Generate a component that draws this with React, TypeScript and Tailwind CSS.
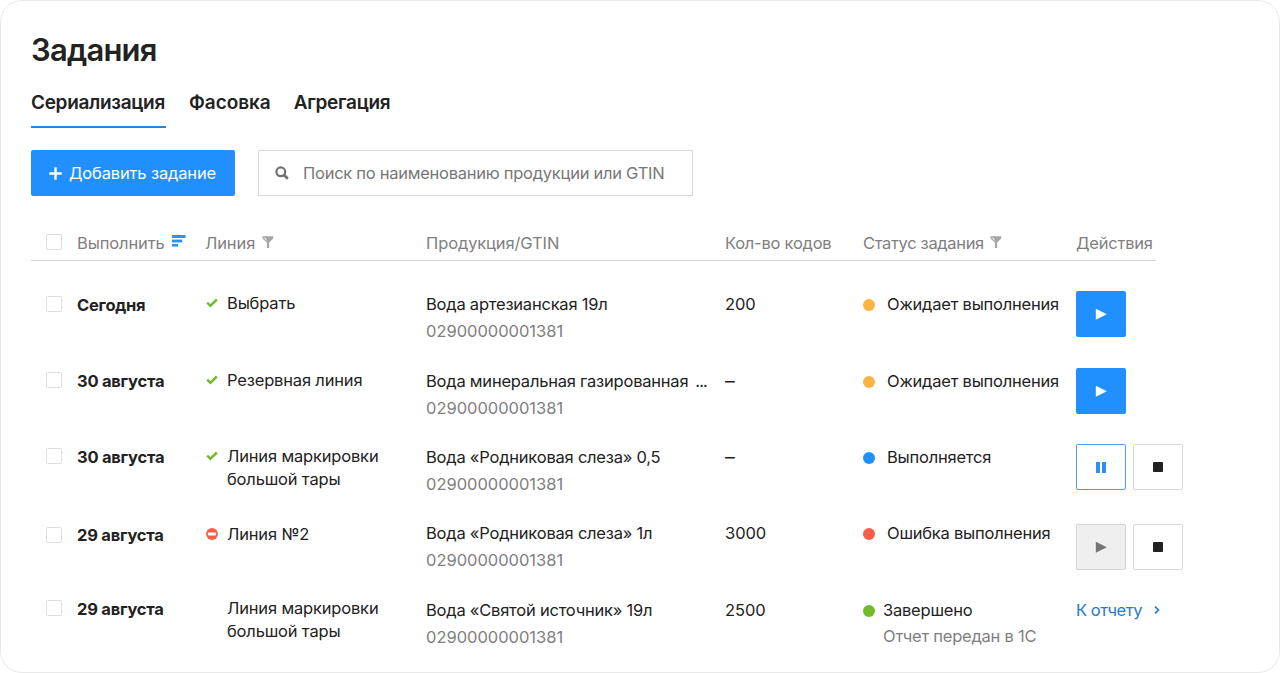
import type { ReactNode } from "react";

const COLS = "grid grid-cols-[46px_128px_22px_199px_299px_138px_213px_1fr]";

type Status = { color: string; label: string; note?: string; tight?: boolean };
type Task = {
  height: string;
  checkTop: string;
  date: string;
  dateTop: string;
  line: string[];
  lineTop: string;
  lineState: "ok" | "blocked" | "none";
  product: string;
  truncated?: boolean;
  count: string;
  status: Status;
  actions: ReactNode;
};

function Checkbox() {
  return <span className="ml-[15px] block size-4 rounded-[2px] border border-[#dedede] bg-white" />;
}

function FilterIcon() {
  return (
    <svg width="12" height="13" viewBox="0 0 12 13" fill="none">
      <path d="M0 0.3H11.5L10.8 3L7.1 6.4V12H4.9V6.4L1 3Z" fill="#a6a6a6" />
      <path d="M2.2 1.6L4.6 4.4" stroke="#fff" strokeWidth="1" />
    </svg>
  );
}

function SortIcon() {
  return (
    <svg width="14" height="13" viewBox="0 0 14 13" fill="#2a92fa">
      <rect x="0" y="0" width="13.5" height="3" />
      <rect x="0" y="4.6" width="10.3" height="2.8" />
      <rect x="0" y="9" width="6" height="2.6" />
    </svg>
  );
}

function CheckIcon() {
  return (
    <svg width="12" height="10" viewBox="0 0 12 10" fill="none">
      <path d="M1.2 4.7L4.4 7.8L10.8 1.5" stroke="#6fbb2c" strokeWidth="2.5" />
    </svg>
  );
}

function BlockedIcon() {
  return (
    <svg width="12" height="12" viewBox="0 0 12 12">
      <circle cx="6" cy="6" r="5.9" fill="#fa5d48" />
      <rect x="2" y="4.6" width="8" height="2.8" rx="0.6" fill="#fff" />
    </svg>
  );
}

function PlayIcon({ color }: { color: string }) {
  return (
    <svg width="12" height="12" viewBox="0 0 12 12" fill={color}>
      <path d="M0.8 0.8L11.8 6.3L0.8 11.8Z" />
    </svg>
  );
}

function PlayButton() {
  return (
    <button className="flex h-[46px] w-[50px] items-center justify-center rounded-[2px] bg-[#228fff]">
      <PlayIcon color="#fff" />
    </button>
  );
}

function DisabledPlayButton() {
  return (
    <button className="flex h-[46px] w-[50px] items-center justify-center rounded-[2px] border border-[#d3d3d3] bg-[#efefef]">
      <PlayIcon color="#747474" />
    </button>
  );
}

function PauseButton() {
  return (
    <button className="flex h-[46px] w-[50px] items-center justify-center gap-0.5 rounded-[2px] border border-[#4b9df0] bg-white">
      <span className="h-[11px] w-1 bg-[#2b90fb]" />
      <span className="h-[11px] w-1 bg-[#2b90fb]" />
    </button>
  );
}

function StopButton() {
  return (
    <button className="flex h-[46px] w-[50px] items-center justify-center rounded-[2px] border border-[#d8d8d8] bg-white">
      <span className="mb-px size-2.5 rounded-[1px] bg-[#222]" />
    </button>
  );
}

const tasks: Task[] = [
  {
    height: "h-[77px]",
    checkTop: "pt-[5px]",
    date: "Сегодня",
    dateTop: "pt-px",
    line: ["Выбрать"],
    lineTop: "pt-px",
    lineState: "ok",
    product: "Вода артезианская 19л",
    count: "200",
    status: { color: "bg-[#fbb442]", label: "Ожидает выполнения" },
    actions: <PlayButton />,
  },
  {
    height: "h-[76px]",
    checkTop: "pt-1",
    date: "30 августа",
    dateTop: "pt-0",
    line: ["Резервная линия"],
    lineTop: "pt-px",
    lineState: "ok",
    product: "Вода минеральная газированная",
    truncated: true,
    count: "–",
    status: { color: "bg-[#fbb442]", label: "Ожидает выполнения" },
    actions: <PlayButton />,
  },
  {
    height: "h-[76px]",
    checkTop: "pt-1",
    date: "30 августа",
    dateTop: "pt-0",
    line: ["Линия маркировки", "большой тары"],
    lineTop: "pt-px",
    lineState: "ok",
    product: "Вода «Родниковая слеза» 0,5",
    count: "–",
    status: { color: "bg-[#228fff]", label: "Выполняется" },
    actions: (
      <>
        <PauseButton />
        <StopButton />
      </>
    ),
  },
  {
    height: "h-[77px]",
    checkTop: "pt-[7px]",
    date: "29 августа",
    dateTop: "pt-0.5",
    line: ["Линия №2"],
    lineTop: "pt-[3px]",
    lineState: "blocked",
    product: "Вода «Родниковая слеза» 1л",
    count: "3000",
    status: { color: "bg-[#fa5d48]", label: "Ошибка выполнения" },
    actions: (
      <div className="flex gap-[7px] pt-1">
        <DisabledPlayButton />
        <StopButton />
      </div>
    ),
  },
  {
    height: "h-[70px]",
    checkTop: "pt-[3px]",
    date: "29 августа",
    dateTop: "-mt-px",
    line: ["Линия маркировки", "большой тары"],
    lineTop: "pt-0",
    lineState: "none",
    product: "Вода «Святой источник» 19л",
    count: "2500",
    status: { color: "bg-[#72bd27]", label: "Завершено", note: "Отчет передан в 1С", tight: true },
    actions: (
      <a className="flex h-[26px] items-center gap-3 text-[#2879cf]">
        <span className="tracking-[-0.45px]">К отчету</span>
        <svg width="6" height="8" viewBox="0 0 6 8" fill="none">
          <path d="M1 0.6L4.5 4L1 7.4" stroke="#2879cf" strokeWidth="1.7" />
        </svg>
      </a>
    ),
  },
];

function TaskRow({ task }: { task: Task }) {
  return (
    <div className={`${COLS} ${task.height}`}>
      <div className={task.checkTop}>
        <Checkbox />
      </div>
      <div className={`${task.dateTop} font-bold tracking-[-0.24px]`}>{task.date}</div>
      <div className={task.lineTop}>
        <div className="flex h-[21px] items-center pl-px">
          {task.lineState === "ok" && <CheckIcon />}
          {task.lineState === "blocked" && <BlockedIcon />}
        </div>
      </div>
      <div className={`${task.lineTop} leading-[23px] tracking-[-0.17px]`}>
        {task.line.map((l) => (
          <div key={l}>{l}</div>
        ))}
      </div>
      <div>
        <div className="flex whitespace-nowrap">
          <span className="tracking-[-0.22px]">{task.product}</span>
          {task.truncated && <span className="ml-[7px] tracking-[-0.9px]">...</span>}
        </div>
        <div className="pt-px tracking-[-0.02px] text-[#808080]">02900000001381</div>
      </div>
      <div className="tracking-[-0.05px]">
        {task.count === "–" ? <span className="text-[19.5px]">–</span> : task.count}
      </div>
      <div className={`flex ${task.status.tight ? "gap-2" : "gap-3"}`}>
        <span className={`mt-2 size-3 shrink-0 rounded-full ${task.status.color}`} />
        <div className="whitespace-nowrap tracking-[-0.22px]">
          <div>{task.status.label}</div>
          {task.status.note && <div className="tracking-[-0.24px] text-[#808080]">{task.status.note}</div>}
        </div>
      </div>
      <div className="flex gap-[7px]">{task.actions}</div>
    </div>
  );
}

export default function App() {
  return (
    <div className="h-[673px] w-[1280px] bg-white">
      <main className="h-full overflow-hidden rounded-[22px] border border-[#e9e9e9] bg-white pl-[30px] font-[Inter,sans-serif] text-[16.5px] leading-[26px] tracking-[-0.12px] text-[#222]">
        <h1 className="mt-[29px] h-10 text-[31px] leading-10 font-semibold tracking-[-0.8px]">Задания</h1>

        <nav className="mt-[19px] flex h-[39px] gap-[23px] text-[19px] leading-7 font-semibold">
          <a className="w-[135px] border-b-2 border-[#2b83dc] tracking-[-0.32px] whitespace-nowrap">Сериализация</a>
          <a className="tracking-[-0.05px]">Фасовка</a>
          <a className="tracking-[-0.3px]">Агрегация</a>
        </nav>

        <div className="mt-[22px] flex h-[46px] gap-[23px]">
          <button className="flex w-[204px] items-center gap-[7px] rounded-[2px] bg-[#228fff] pl-[18px] text-white">
            <svg width="13" height="13" viewBox="0 0 13 13" stroke="#fff" strokeWidth="2.4">
              <path d="M6.5 0.3V12.7M0.3 6.5H12.7" />
            </svg>
            <span className="tracking-[-0.16px]">Добавить задание</span>
          </button>
          <div className="flex w-[435px] items-center gap-3.5 border border-[#d9d9d9] pl-4 text-[#777]">
            <svg width="14" height="14" viewBox="0 0 14 14" fill="none" stroke="#707070">
              <circle cx="5.8" cy="5.8" r="4.4" strokeWidth="2.2" />
              <path d="M9 9L12.8 12.8" strokeWidth="2.7" />
            </svg>
            <span className="whitespace-nowrap tracking-[-0.26px]">Поиск по наименованию продукции или GTIN</span>
          </div>
        </div>

        <div className={`${COLS} mt-[33px] h-8 w-[1125px] border-b border-[#d6d6d6] text-[#808080]`}>
          <div className="pt-[5px]">
            <Checkbox />
          </div>
          <div className="flex gap-[7px] pt-px">
            <span>Выполнить</span>
            <span className="pt-[5px]">
              <SortIcon />
            </span>
          </div>
          <div className="col-span-2 flex gap-[7px] pt-px">
            <span>Линия</span>
            <span className="pt-1.5">
              <FilterIcon />
            </span>
          </div>
          <div className="pt-px">Продукция/GTIN</div>
          <div className="pt-px tracking-[-0.24px]">Кол-во кодов</div>
          <div className="flex gap-1.5 pt-px">
            <span className="tracking-[-0.34px]">Статус задания</span>
            <span className="pt-1.5">
              <FilterIcon />
            </span>
          </div>
          <div className="pt-px tracking-[-0.22px]">Действия</div>
        </div>

        <div className="pt-[30px]">
          {tasks.map((t, i) => (
            <TaskRow key={i} task={t} />
          ))}
        </div>
      </main>
    </div>
  );
}
